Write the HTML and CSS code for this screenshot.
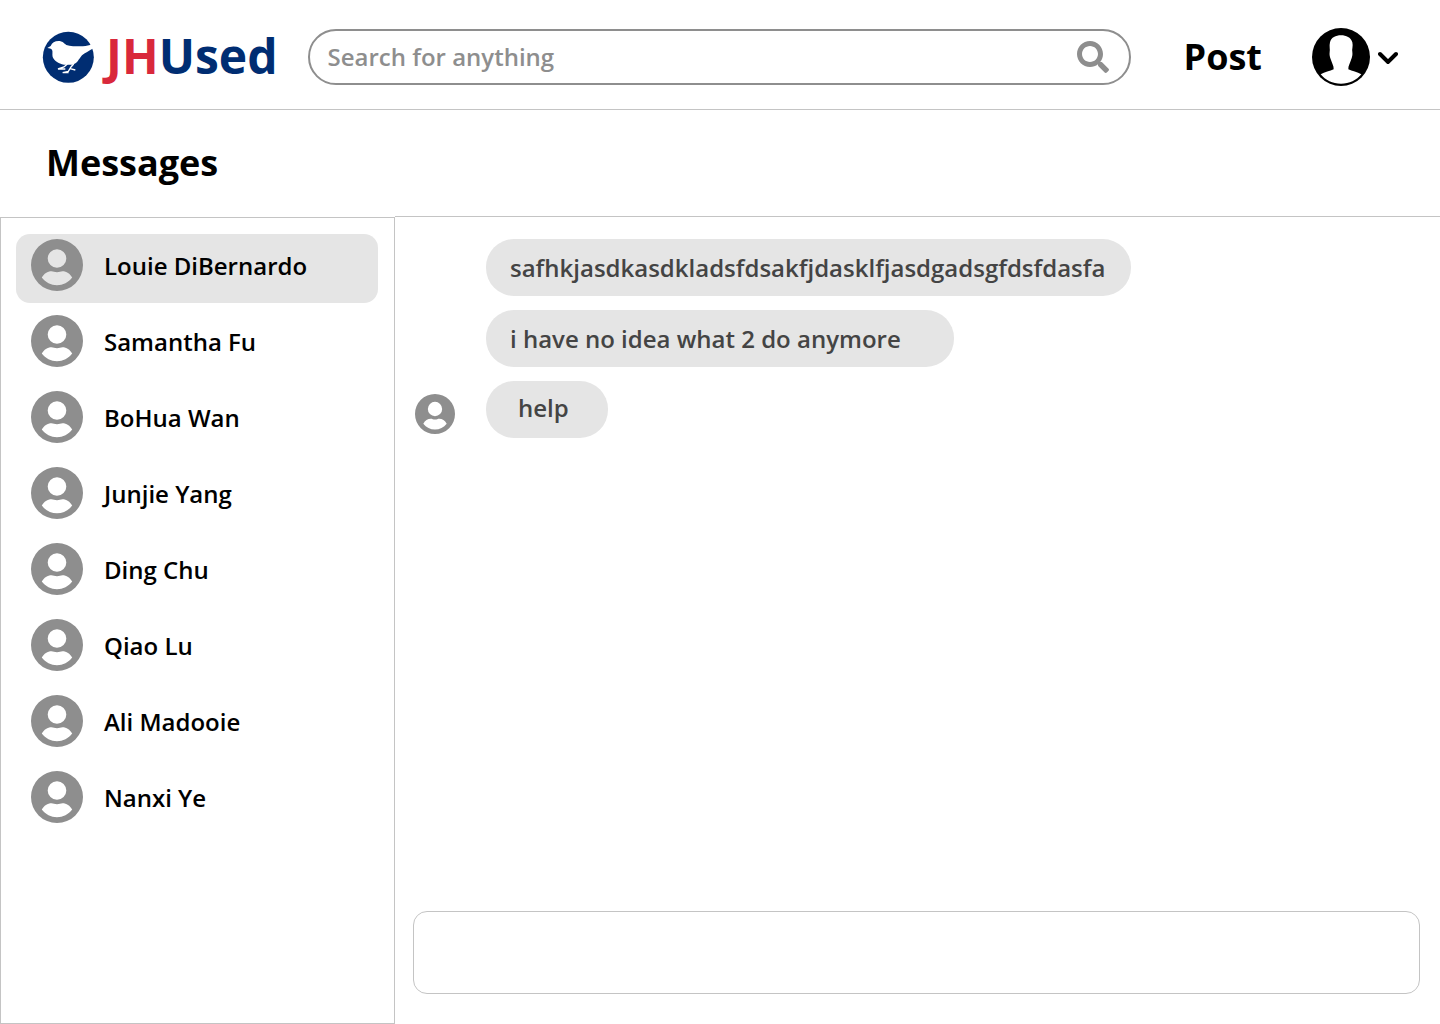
FILE: index.html
```html
<!DOCTYPE html>
<html lang="en">
<head>
  <meta charset="utf-8">
  <meta name="viewport" content="width=device-width, initial-scale=1">
  <title>JHUsed - Messages</title>
  <link rel="stylesheet" href="styles.css">
</head>
<body>
  <svg class="symbols" aria-hidden="true">
    <symbol id="person" viewBox="0 0 52 52">
      <path fill-rule="evenodd" d="M26 0a26 26 0 1 0 0 52a26 26 0 1 0 0-52zM26 10.200a9.300 9.300 0 1 1 0 18.600a9.300 9.300 0 1 1 0-18.600zM10.800 38.600C13 34.600 16.500 32.300 20.500 32.300C22.500 32.300 23.500 33.300 26 33.300C28.500 33.300 29.500 32.300 31.500 32.300C35.500 32.300 39 34.600 41.200 38.600C37.500 43.500 32 46.300 26 46.300C20 46.300 14.500 43.500 10.800 38.600z"/>
    </symbol>
  </svg>

  <header class="header">
    <a class="logo" href="#">
      <svg class="logo-mark" viewBox="0 2 192 192" aria-hidden="true">
        <circle class="logo-disc" cx="97" cy="99" r="76.500"/>
        <path class="logo-bird" d="M34 71L44 65C48 55 56 50 68 50C79 50 84 57 91 62C102 66 120 66 132 66C144 66 154 64 162 62L192 52L190 57L174 71C158 80 147 86 138 93C133 99 130 104 125 111C121 117 114 120 108 121H84C67 118 54 109 50 98C48 90 51 82 48 76C45 73 40 72 34 71z"/>
        <path class="logo-claws" d="M94 119L84 128L66 134L88 134M113 119L105 128L97 141L80 145L98 145M102 133L118 137"/>
      </svg>
      <span class="logo-name"><span class="logo-jh">JH</span>Used</span>
    </a>
    <form class="search" role="search">
      <input class="search-input" type="search" placeholder="Search for anything" aria-label="Search for anything">
      <button class="search-button" type="button" aria-label="Search">
        <svg viewBox="0 0 512 512" aria-hidden="true"><path d="M505 442.700L405.300 343c-4.500-4.500-10.600-7-17-7H372c27.600-35.300 44-79.700 44-128C416 93.100 322.900 0 208 0S0 93.100 0 208s93.100 208 208 208c48.300 0 92.700-16.400 128-44v16.300c0 6.400 2.500 12.500 7 17l99.700 99.700c9.400 9.400 24.600 9.400 33.900 0l28.300-28.300c9.400-9.400 9.400-24.600.1-34zM208 336c-70.700 0-128-57.200-128-128 0-70.700 57.200-128 128-128 70.700 0 128 57.200 128 128 0 70.700-57.200 128-128 128z"/></svg>
      </button>
    </form>
    <a class="post" href="#">Post</a>
    <button class="account" type="button" aria-label="Account menu">
      <svg class="account-photo" viewBox="34 25 174 174" aria-hidden="true">
        <circle cx="121" cy="112" r="87"/>
        <path fill="#fff" d="M60 164C72 157 88 154 99 149C100 139 93 129 91 121C87 112 86 105 87 97C89 90 85 80 88 68C92 53 105 47 121 47C137 47 150 53 155 68C158 80 153 90 155 97C156 105 155 112 151 121C149 129 142 139 143 149C154 154 170 157 182 164C168 182 146 192 121 192C96 192 74 182 60 164z"/>
      </svg>
      <svg class="account-arrow" viewBox="0 0 20 14" aria-hidden="true"><path d="M2 4l8 8l8-8"/></svg>
    </button>
  </header>

  <h1 class="title">Messages</h1>

  <main class="main">
    <nav class="contacts" aria-label="Conversations">
      <a class="contact contact-active" href="#" aria-current="true"><svg class="avatar"><use href="#person"/></svg><span class="contact-name">Louie DiBernardo</span></a>
      <a class="contact" href="#"><svg class="avatar"><use href="#person"/></svg><span class="contact-name">Samantha Fu</span></a>
      <a class="contact" href="#"><svg class="avatar"><use href="#person"/></svg><span class="contact-name">BoHua Wan</span></a>
      <a class="contact" href="#"><svg class="avatar"><use href="#person"/></svg><span class="contact-name">Junjie Yang</span></a>
      <a class="contact" href="#"><svg class="avatar"><use href="#person"/></svg><span class="contact-name">Ding Chu</span></a>
      <a class="contact" href="#"><svg class="avatar"><use href="#person"/></svg><span class="contact-name">Qiao Lu</span></a>
      <a class="contact" href="#"><svg class="avatar"><use href="#person"/></svg><span class="contact-name">Ali Madooie</span></a>
      <a class="contact" href="#"><svg class="avatar"><use href="#person"/></svg><span class="contact-name">Nanxi Ye</span></a>
    </nav>
    <section class="chat" aria-label="Conversation with Louie DiBernardo">
      <div class="thread">
        <svg class="avatar avatar-small"><use href="#person"/></svg>
        <div class="bubbles">
          <p class="bubble">safhkjasdkasdkladsfdsakfjdasklfjasdgadsgfdsfdasfa</p>
          <p class="bubble bubble-wide">i have no idea what 2 do anymore</p>
          <p class="bubble bubble-short">help</p>
        </div>
      </div>
      <textarea class="composer" aria-label="Write a message"></textarea>
    </section>
  </main>
</body>
</html>
```
FILE: styles.css
```css
* {
  box-sizing: border-box;
}

body {
  display: flex;
  flex-direction: column;
  min-height: 100vh;
  margin: 0;
  background: #fff;
  color: #000;
  font-family: "Open Sans", sans-serif;
  font-size: 24px;
  font-weight: 600;
  line-height: 32px;
}

a {
  color: inherit;
  text-decoration: none;
}

button {
  padding: 0;
  border: 0;
  background: none;
  cursor: pointer;
}

.symbols {
  position: absolute;
  width: 0;
  height: 0;
}

/* Header */

.header {
  display: flex;
  align-items: center;
  padding: 25px 42px 20px 36px;
  border-bottom: 1px solid #c4c4c4;
}

.logo {
  display: flex;
  align-items: flex-start;
}

.logo-mark {
  width: 64px;
  height: 64px;
}

.logo-disc {
  fill: #002d72;
}

.logo-bird {
  fill: #fff;
}

.logo-claws {
  fill: none;
  stroke: #fff;
  stroke-width: 4;
}

.logo-name {
  margin-left: 6px;
  color: #002d72;
  font-size: 48px;
  font-weight: 700;
  line-height: 62px;
}

.logo-jh {
  color: #d9283b;
}

.search {
  display: flex;
  flex: 1;
  align-items: center;
  height: 56px;
  margin: 0 53px 0 30px;
  padding: 0 20px 0 18px;
  border: 2px solid #8e8e8e;
  border-radius: 28px;
}

.search-input {
  flex: 1;
  min-width: 0;
  padding: 0;
  border: 0;
  outline: 0;
  background: none;
  font: inherit;
}

.search-input::placeholder {
  color: #8e8e8e;
}

.search-button {
  display: flex;
  width: 32px;
  height: 32px;
  fill: #8e8e8e;
}

.post {
  font-size: 36px;
  font-weight: 700;
  line-height: 48px;
}

.account {
  display: flex;
  align-items: center;
  gap: 8px;
  margin-left: 50px;
}

.account-photo {
  width: 58px;
  height: 58px;
}

.account-arrow {
  width: 20px;
  height: 14px;
  fill: none;
  stroke: #000;
  stroke-width: 4;
  stroke-linecap: round;
}

.title {
  margin: 0;
  padding: 29px 46px;
  font-size: 36px;
  font-weight: 700;
  line-height: 48px;
}

/* Conversations */

.main {
  display: flex;
  flex: 1;
}

.contacts {
  display: flex;
  flex: 0 0 395px;
  flex-direction: column;
  gap: 7px;
  margin-top: 1px;
  padding: 16px 16px 16px 15px;
  border: 1px solid #c4c4c4;
}

.contact {
  display: flex;
  align-items: center;
  gap: 21px;
  padding: 5px 15px 12px;
  border-radius: 14px;
}

.contact-active {
  background: #e5e5e5;
}

.contact-name {
  padding-top: 2px;
}

.avatar {
  flex: none;
  width: 52px;
  height: 52px;
  fill: #8e8e8e;
}

.avatar-small {
  width: 40px;
  height: 40px;
}

/* Chat */

.chat {
  display: flex;
  flex: 1;
  flex-direction: column;
  justify-content: space-between;
  gap: 24px;
  padding: 22px 20px 30px 18px;
  border-top: 1px solid #c4c4c4;
}

.thread {
  display: flex;
  align-items: flex-end;
  gap: 31px;
  padding-left: 2px;
}

.thread .avatar {
  margin-bottom: 4px;
}

.bubbles {
  display: flex;
  flex-direction: column;
  align-items: flex-start;
  gap: 14px;
}

.bubble {
  margin: 0;
  padding: 13px 26px 12px 24px;
  border-radius: 28px;
  background: #e5e5e5;
  color: #444;
}

.bubble-wide {
  padding-right: 53px;
}

.bubble-short {
  padding: 11px 39px 14px 32px;
}

.composer {
  width: 100%;
  height: 83px;
  padding: 24px;
  border: 1px solid #c4c4c4;
  border-radius: 14px;
  font: inherit;
  resize: none;
}
```
